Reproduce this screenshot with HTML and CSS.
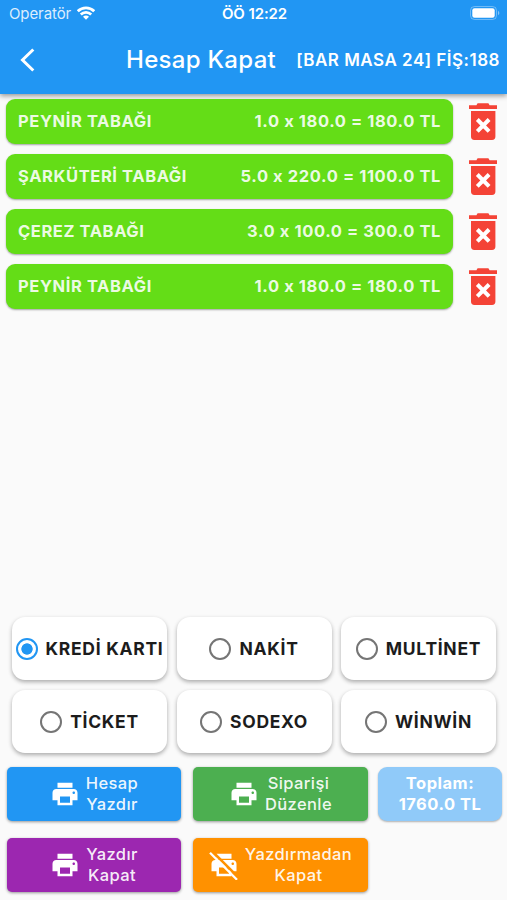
FILE: index.html
```html
<!DOCTYPE html>
<html lang="tr">
<head>
    <meta charset="UTF-8">
    <meta name="viewport" content="width=device-width, initial-scale=1.0">
    <title>Hesap Kapat</title>
    <link rel="stylesheet" href="styles.css">
</head>
<body>
    <!-- Shared icons -->
    <svg class="icon-defs" width="0" height="0">
        <symbol id="icon-trash" viewBox="0 0 28 37">
            <path d="M0 2.200h7.400L8.600.3h10.800l1.200 1.900H28v3.900H0z"/>
            <path d="M2 8h24.400v25.600a3.400 3.400 0 0 1-3.400 3.400H5.400a3.400 3.400 0 0 1-3.400-3.400z"/>
            <path d="M8.300 16.500l11.800 11.800M20.100 16.500L8.300 28.300" stroke="#fff" stroke-width="4"/>
        </symbol>
        <symbol id="icon-print" viewBox="0 0 24 24">
            <path d="M19 8H5c-1.660 0-3 1.340-3 3v6h4v4h12v-4h4v-6c0-1.660-1.340-3-3-3zm-3 11H8v-5h8v5zm3-7c-.55 0-1-.45-1-1s.45-1 1-1 1 .45 1 1-.45 1-1 1zm-1-9H6v4h12V3z"/>
        </symbol>
    </svg>

    <header class="app-header">
        <div class="status-bar">
            <div class="carrier">
                <span>Operatör</span>
                <svg class="wifi" viewBox="0 0 18 14">
                    <g fill="none" stroke="#fff" stroke-width="2.700">
                        <path d="M.8 5.200a11.600 11.600 0 0 1 16.400 0"/>
                        <path d="M3.800 8.500a7.350 7.350 0 0 1 10.400 0"/>
                    </g>
                    <path fill="#fff" d="M9 13.800L6 10.800a4.250 4.250 0 0 1 6 0z"/>
                </svg>
            </div>
            <span class="clock">ÖÖ 12:22</span>
            <svg class="battery" viewBox="0 0 30 14">
                <rect x=".5" y=".5" width="26" height="13" rx="4" fill="none" stroke="#fff" stroke-opacity=".35"/>
                <rect x="2.300" y="2.300" width="22.400" height="9.400" rx="2.200" fill="#fff"/>
                <path d="M28 4.800c1.800.8 1.800 3.600 0 4.400z" fill="#fff" fill-opacity=".45"/>
            </svg>
        </div>
        <div class="title-bar">
            <svg class="back" viewBox="0 0 16 24">
                <path d="M13.300 1.500L2.500 12l10.800 10.500" fill="none" stroke="#fff" stroke-width="3"/>
            </svg>
            <h1>Hesap Kapat</h1>
            <span class="table-name">[BAR MASA 24] FİŞ:188</span>
        </div>
    </header>

    <main class="order-list">
        <div class="order-row">
            <div class="order-item"><span>PEYNİR TABAĞI</span><span>1.0 x 180.0 = 180.0 TL</span></div>
            <svg class="trash"><use href="#icon-trash"/></svg>
        </div>
        <div class="order-row">
            <div class="order-item"><span>ŞARKÜTERİ TABAĞI</span><span>5.0 x 220.0 = 1100.0 TL</span></div>
            <svg class="trash"><use href="#icon-trash"/></svg>
        </div>
        <div class="order-row">
            <div class="order-item"><span>ÇEREZ TABAĞI</span><span>3.0 x 100.0 = 300.0 TL</span></div>
            <svg class="trash"><use href="#icon-trash"/></svg>
        </div>
        <div class="order-row">
            <div class="order-item"><span>PEYNİR TABAĞI</span><span>1.0 x 180.0 = 180.0 TL</span></div>
            <svg class="trash"><use href="#icon-trash"/></svg>
        </div>
    </main>

    <div class="payments">
        <label class="payment selected"><i class="radio"></i>KREDİ KARTI</label>
        <label class="payment"><i class="radio"></i>NAKİT</label>
        <label class="payment"><i class="radio"></i>MULTİNET</label>
        <label class="payment"><i class="radio"></i>TİCKET</label>
        <label class="payment"><i class="radio"></i>SODEXO</label>
        <label class="payment"><i class="radio"></i>WİNWİN</label>
    </div>

    <div class="actions">
        <button class="action-btn blue">
            <svg class="print"><use href="#icon-print"/></svg>
            <span>Hesap<br>Yazdır</span>
        </button>
        <button class="action-btn green">
            <svg class="print"><use href="#icon-print"/></svg>
            <span>Siparişi<br>Düzenle</span>
        </button>
        <div class="total">Toplam:<br>1760.0 TL</div>
        <button class="action-btn purple">
            <svg class="print"><use href="#icon-print"/></svg>
            <span>Yazdır<br>Kapat</span>
        </button>
        <button class="action-btn orange">
            <svg class="print" viewBox="0 0 24 24">
                <use href="#icon-print" width="24" height="24"/>
                <path d="M2.300.8L23.800 22.300" stroke="#ff9100" stroke-width="2"/>
                <path d="M.8 2.200L22.400 23.800" stroke="#fff" stroke-width="1.800"/>
            </svg>
            <span>Yazdırmadan<br>Kapat</span>
        </button>
    </div>
</body>
</html>
```

FILE: styles.css
```css
* {
    margin: 0;
    padding: 0;
    box-sizing: border-box;
}

body {
    font-family: Inter, Roboto, sans-serif;
    background: #fafafa;
    height: 900px;
    display: flex;
    flex-direction: column;
    overflow: hidden;
}

.icon-defs {
    position: absolute;
}

.app-header {
    height: 94px;
    background: #2196f3;
    color: white;
    box-shadow: 0 2px 5px rgba(0, 0, 0, 0.4);
}

.status-bar {
    height: 26px;
    padding: 0 7px 0 9px;
    display: grid;
    grid-template-columns: 1fr auto 1fr;
    align-items: center;
    font-size: 15px;
}

.carrier {
    display: flex;
    align-items: center;
    gap: 6px;
    color: rgba(255, 255, 255, 0.85);
    letter-spacing: -0.1px;
}

.wifi {
    width: 18px;
    height: 14px;
}

.clock {
    font-weight: 600;
    letter-spacing: -0.1px;
}

.battery {
    width: 30px;
    height: 14px;
    justify-self: end;
}

.title-bar {
    height: 67px;
    padding: 0 7px 0 20px;
    display: flex;
    align-items: center;
}

.back {
    width: 16px;
    height: 24px;
}

h1 {
    margin-left: 90px;
    font-size: 24px;
    font-weight: 450;
    letter-spacing: 0.3px;
}

.table-name {
    margin-left: auto;
    font-size: 17px;
    font-weight: 600;
    letter-spacing: 0.5px;
    white-space: nowrap;
}

.order-list {
    flex: 1;
    padding-top: 5px;
}

.order-row {
    height: 45px;
    margin-bottom: 10px;
    padding: 0 10px 0 6px;
    display: flex;
    align-items: center;
    justify-content: space-between;
}

.order-item {
    width: 447px;
    height: 45px;
    padding: 0 12px 2px;
    display: flex;
    align-items: center;
    justify-content: space-between;
    background: #64dd17;
    border-radius: 9px;
    box-shadow: 0 1px 2px rgba(0, 0, 0, 0.35);
    color: rgba(255, 255, 255, 0.9);
    font-size: 16.5px;
    font-weight: 650;
    letter-spacing: 0.6px;
}

.trash {
    width: 28px;
    height: 37px;
    fill: #f44336;
}

.payments {
    padding: 0 11px 0 12px;
    display: grid;
    grid-template-columns: repeat(3, 155px);
    grid-auto-rows: 63px;
    justify-content: space-between;
    row-gap: 10px;
}

.payment {
    display: flex;
    align-items: center;
    justify-content: center;
    gap: 8px;
    background: white;
    border-radius: 13px;
    box-shadow: 0 2px 4px rgba(0, 0, 0, 0.32);
    color: #1c1c1c;
    font-size: 17.5px;
    font-weight: 650;
    letter-spacing: 0.7px;
    white-space: nowrap;
}

.radio {
    width: 22px;
    height: 22px;
    flex-shrink: 0;
    border: 2px solid #757575;
    border-radius: 50%;
}

.selected .radio {
    border-color: #2196f3;
    background: radial-gradient(circle, #2196f3 5.3px, transparent 6px);
}

.actions {
    padding: 14px 5px 8px 7px;
    display: grid;
    grid-template-columns: 174px 175px 124px;
    grid-auto-rows: 54px;
    column-gap: 12px;
    row-gap: 17px;
}

.total {
    margin-left: -2px;
    margin-right: 2px;
}

.action-btn {
    display: flex;
    align-items: center;
    justify-content: center;
    gap: 6px;
    border: none;
    border-radius: 5px;
    box-shadow: 0 1px 3px rgba(0, 0, 0, 0.4);
    color: rgba(255, 255, 255, 0.93);
    font-family: inherit;
    font-size: 16.5px;
    font-weight: 500;
    line-height: 21px;
    letter-spacing: 0.4px;
}

.print {
    width: 30px;
    height: 30px;
    fill: white;
}

.blue {
    background: #2196f3;
}

.green {
    background: #4caf50;
}

.purple {
    background: #9c27b0;
}

.orange {
    background: #ff9100;
}

.total {
    padding-top: 6px;
    background: #90caf9;
    border-radius: 9px;
    box-shadow: 0 1px 2px rgba(0, 0, 0, 0.3);
    color: white;
    text-align: center;
    font-size: 16.5px;
    font-weight: 650;
    line-height: 21px;
    letter-spacing: 0.5px;
}
```
